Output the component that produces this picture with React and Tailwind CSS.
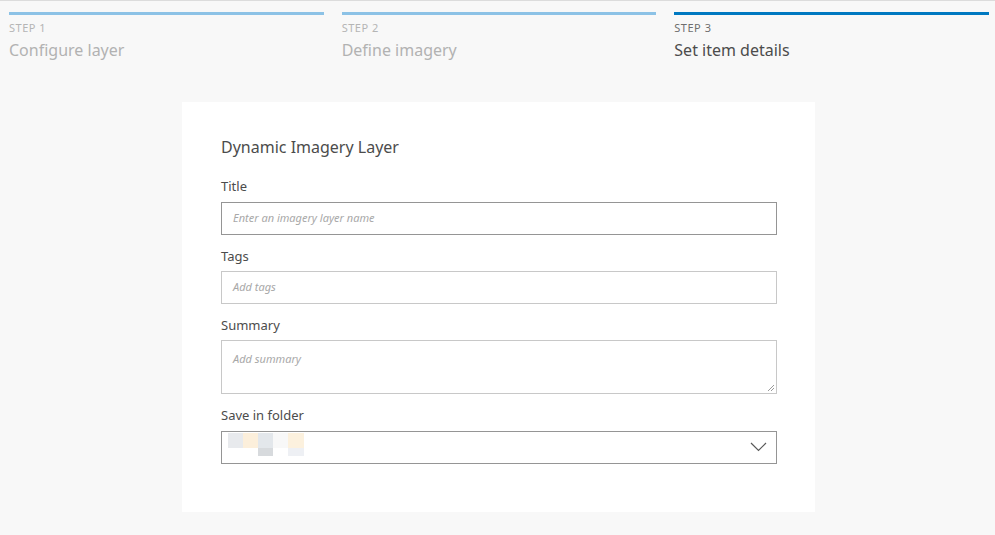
import React from "react";

const font = { fontFamily: "'Noto Sans', 'Open Sans', sans-serif" };

function Step({ n, title, active }) {
  return (
    <div className="flex flex-col">
      <div className={active ? "h-[3px] bg-[#0079c1]" : "h-[3px] bg-[#8cc2e6]"} />
      <div className={"mt-[6px] text-[11px] leading-[14px] tracking-[0.5px] " + (active ? "text-[#6e6e6e]" : "text-[#b5b5b5]")}>
        STEP {n}
      </div>
      <div className={"mt-[4px] text-[16px] leading-[22px] " + (active ? "text-[#4c4c4c]" : "text-[#b2b2b2]")}>
        {title}
      </div>
    </div>
  );
}

function Label({ children, className = "" }) {
  return <div className={"text-[13px] leading-[16px] text-[#4c4c4c] " + className}>{children}</div>;
}

export default function App() {
  return (
    <div className="w-[995px] h-[535px] bg-[#f8f8f8] border-t border-[#dcdcdc] overflow-hidden" style={font}>
      <div className="grid grid-cols-3 gap-x-[18px] pl-[9px] pr-[6px] pt-[11px]">
        <Step n={1} title="Configure layer" />
        <Step n={2} title="Define imagery" />
        <Step n={3} title="Set item details" active />
      </div>
      <div className="ml-[182px] mt-[41px] w-[633px] h-[410px] bg-white pl-[39px] pr-[38px] pt-[34px]">
        <div className="text-[16px] leading-[22px] text-[#4c4c4c]">Dynamic Imagery Layer</div>
        <Label className="mt-[20px]">Title</Label>
        <div className="mt-[8px] h-[33px] border border-[#959595] flex items-center px-[11px]">
          <span className="text-[11px] italic text-[#a8a8a8]">Enter an imagery layer name</span>
        </div>
        <Label className="mt-[13px]">Tags</Label>
        <div className="mt-[7px] h-[33px] border border-[#c8c8c8] flex items-center px-[11px]">
          <span className="text-[11px] italic text-[#a8a8a8]">Add tags</span>
        </div>
        <Label className="mt-[13px]">Summary</Label>
        <div className="relative mt-[7px] h-[54px] border border-[#c8c8c8] px-[11px] pt-[4px]">
          <span className="text-[11px] italic text-[#a8a8a8]">Add summary</span>
          <svg className="absolute right-[1px] bottom-[1px]" width="8" height="8" viewBox="0 0 8 8">
            <path d="M7 1 L1 7 M7 4 L4 7" stroke="#9a9a9a" strokeWidth="1" />
          </svg>
        </div>
        <Label className="mt-[13px]">Save in folder</Label>
        <div className="relative mt-[8px] h-[33px] border border-[#959595] flex items-start pl-[6px] pt-[1px]">
          <div className="flex flex-col">
            <div className="flex">
              <div className="w-[15px] h-[15px] bg-[#e8eaed]" />
              <div className="w-[15px] h-[15px] bg-[#fcefdb]" />
              <div className="w-[15px] h-[15px] bg-[#e3e7eb]" />
              <div className="w-[15px] h-[15px] bg-[#f8f8f8]" />
              <div className="w-[16px] h-[15px] bg-[#fcf1de]" />
            </div>
            <div className="flex">
              <div className="w-[30px] h-[8px]" />
              <div className="w-[15px] h-[8px] bg-[#d7dadd]" />
              <div className="w-[15px] h-[8px]" />
              <div className="w-[16px] h-[8px] bg-[#eef0f4]" />
            </div>
          </div>
          <svg className="absolute right-[9px] top-[10px]" width="17" height="10" viewBox="0 0 17 10">
            <path d="M1 1 L8.5 8.5 L16 1" stroke="#595959" strokeWidth="1.2" fill="none" />
          </svg>
        </div>
      </div>
    </div>
  );
}
